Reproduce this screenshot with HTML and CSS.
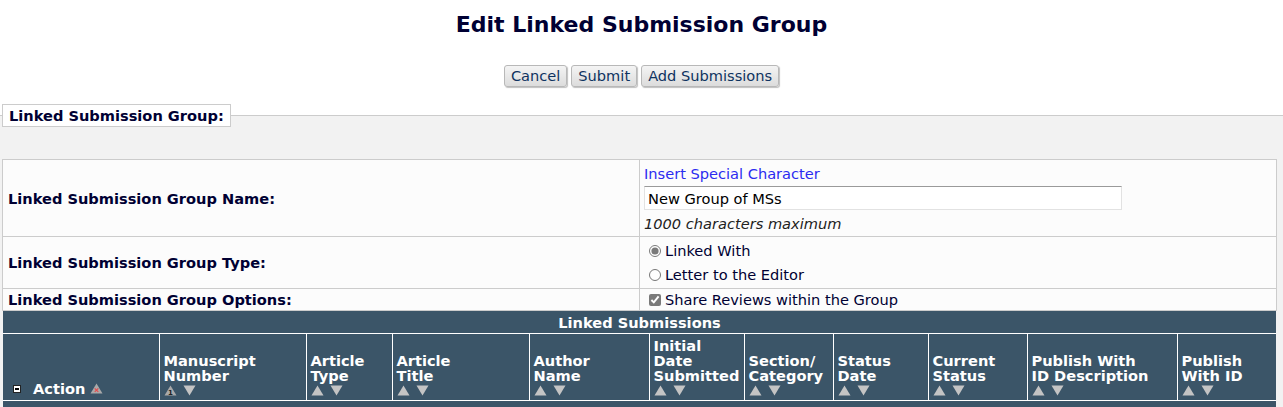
FILE: index.html
```html
<!DOCTYPE html>
<html>
<head>
<meta charset="utf-8">
<link rel="stylesheet" href="styles.css">
</head>
<body>
<h1 class="title">Edit Linked Submission Group</h1>
<div class="actions">
  <button class="btn">Cancel</button>
  <button class="btn">Submit</button>
  <button class="btn">Add Submissions</button>
</div>
<fieldset class="group">
  <legend class="group-legend">Linked Submission Group:</legend>
  <table class="form">
    <tr class="row-name">
      <th class="label">Linked Submission Group Name:</th>
      <td class="value">
        <div class="line"><a class="link" href="#">Insert Special Character</a></div>
        <input class="text-input" type="text" value="New Group of MSs">
        <div class="line hint">1000 characters maximum</div>
      </td>
    </tr>
    <tr class="row-type">
      <th class="label">Linked Submission Group Type:</th>
      <td class="value">
        <label class="opt"><input type="radio" name="t" checked>Linked With</label>
        <label class="opt"><input type="radio" name="t">Letter to the Editor</label>
      </td>
    </tr>
    <tr class="row-opts">
      <th class="label">Linked Submission Group Options:</th>
      <td class="value">
        <label class="opt"><input type="checkbox" checked>Share Reviews within the Group</label>
      </td>
    </tr>
  </table>
  <table class="grid">
    <colgroup>
      <col class="c1"><col class="c2"><col class="c3"><col class="c4"><col class="c5"><col class="c6"><col class="c7"><col class="c8"><col class="c9"><col class="c10"><col class="c11">
    </colgroup>
    <tr><th class="grid-title" colspan="11">Linked Submissions</th></tr>
    <tr class="heads">
      <th><span class="action-head"><span class="minus"></span>Action<svg class="sort" width="13" height="11" viewBox="0 0 13 11"><path d="M6.5 0.5 L12.5 10.5 L0.5 10.5 Z" fill="#a9a9a9"/><path d="M4.7 5.3 L8.3 8.9 M8.3 5.3 L4.7 8.9" stroke="#e8484a" stroke-width="1.1"/></svg></span></th>
      <th>Manuscript<br>Number<div class="arrows"><svg class="sort" width="13" height="11" viewBox="0 0 13 11"><path d="M6.5 0.5 L12.5 10.5 L0.5 10.5 Z" fill="#a9a9a9"/><text x="6.5" y="9.8" font-size="7" font-family="DejaVu Sans, sans-serif" text-anchor="middle" fill="#222">1</text></svg><svg class="sort" width="13" height="11" viewBox="0 0 13 11"><path d="M0.5 0.5 L12.5 0.5 L6.5 10.5 Z" fill="#c4c4c4"/></svg></div></th>
      <th>Article<br>Type<div class="arrows"><svg class="sort" width="13" height="11" viewBox="0 0 13 11"><path d="M6.5 0.5 L12.5 10.5 L0.5 10.5 Z" fill="#c4c4c4"/></svg><svg class="sort" width="13" height="11" viewBox="0 0 13 11"><path d="M0.5 0.5 L12.5 0.5 L6.5 10.5 Z" fill="#c4c4c4"/></svg></div></th>
      <th>Article<br>Title<div class="arrows"><svg class="sort" width="13" height="11" viewBox="0 0 13 11"><path d="M6.5 0.5 L12.5 10.5 L0.5 10.5 Z" fill="#c4c4c4"/></svg><svg class="sort" width="13" height="11" viewBox="0 0 13 11"><path d="M0.5 0.5 L12.5 0.5 L6.5 10.5 Z" fill="#c4c4c4"/></svg></div></th>
      <th>Author<br>Name<div class="arrows"><svg class="sort" width="13" height="11" viewBox="0 0 13 11"><path d="M6.5 0.5 L12.5 10.5 L0.5 10.5 Z" fill="#c4c4c4"/></svg><svg class="sort" width="13" height="11" viewBox="0 0 13 11"><path d="M0.5 0.5 L12.5 0.5 L6.5 10.5 Z" fill="#c4c4c4"/></svg></div></th>
      <th>Initial<br>Date<br>Submitted<div class="arrows"><svg class="sort" width="13" height="11" viewBox="0 0 13 11"><path d="M6.5 0.5 L12.5 10.5 L0.5 10.5 Z" fill="#c4c4c4"/></svg><svg class="sort" width="13" height="11" viewBox="0 0 13 11"><path d="M0.5 0.5 L12.5 0.5 L6.5 10.5 Z" fill="#c4c4c4"/></svg></div></th>
      <th>Section/<br>Category<div class="arrows"><svg class="sort" width="13" height="11" viewBox="0 0 13 11"><path d="M6.5 0.5 L12.5 10.5 L0.5 10.5 Z" fill="#c4c4c4"/></svg><svg class="sort" width="13" height="11" viewBox="0 0 13 11"><path d="M0.5 0.5 L12.5 0.5 L6.5 10.5 Z" fill="#c4c4c4"/></svg></div></th>
      <th>Status<br>Date<div class="arrows"><svg class="sort" width="13" height="11" viewBox="0 0 13 11"><path d="M6.5 0.5 L12.5 10.5 L0.5 10.5 Z" fill="#c4c4c4"/></svg><svg class="sort" width="13" height="11" viewBox="0 0 13 11"><path d="M0.5 0.5 L12.5 0.5 L6.5 10.5 Z" fill="#c4c4c4"/></svg></div></th>
      <th>Current<br>Status<div class="arrows"><svg class="sort" width="13" height="11" viewBox="0 0 13 11"><path d="M6.5 0.5 L12.5 10.5 L0.5 10.5 Z" fill="#c4c4c4"/></svg><svg class="sort" width="13" height="11" viewBox="0 0 13 11"><path d="M0.5 0.5 L12.5 0.5 L6.5 10.5 Z" fill="#c4c4c4"/></svg></div></th>
      <th>Publish With<br>ID Description<div class="arrows"><svg class="sort" width="13" height="11" viewBox="0 0 13 11"><path d="M6.5 0.5 L12.5 10.5 L0.5 10.5 Z" fill="#c4c4c4"/></svg><svg class="sort" width="13" height="11" viewBox="0 0 13 11"><path d="M0.5 0.5 L12.5 0.5 L6.5 10.5 Z" fill="#c4c4c4"/></svg></div></th>
      <th>Publish<br>With ID<div class="arrows"><svg class="sort" width="13" height="11" viewBox="0 0 13 11"><path d="M6.5 0.5 L12.5 10.5 L0.5 10.5 Z" fill="#c4c4c4"/></svg><svg class="sort" width="13" height="11" viewBox="0 0 13 11"><path d="M0.5 0.5 L12.5 0.5 L6.5 10.5 Z" fill="#c4c4c4"/></svg></div></th>
    </tr>
    <tr class="band"><td colspan="11"></td></tr>
  </table>
</fieldset>
</body>
</html>
```

FILE: styles.css
```css
html, body {
  margin: 0;
  padding: 0;
  background: #ffffff;
  font-family: "DejaVu Sans", Verdana, sans-serif;
  font-size: 14.6px;
  color: #000033;
}

.title {
  margin: 0;
  padding-top: 12px;
  height: 26px;
  line-height: 26px;
  text-align: center;
  font-size: 22px;
  font-weight: bold;
  color: #000033;
}

.actions {
  display: flex;
  justify-content: center;
  gap: 4px;
  margin-top: 27px;
  height: 22px;
}

.btn {
  height: 22px;
  padding: 0 6px;
  font-family: "DejaVu Sans", Verdana, sans-serif;
  font-size: 14.6px;
  line-height: 18px;
  color: #0e3360;
  background: linear-gradient(#f4f4f4, #dcdcdc);
  border: 1px solid #b8b8b8;
  border-radius: 3px;
  box-shadow: 1px 1px 1px rgba(0,0,0,0.25);
}

.group {
  margin: 17px 0 0 0;
  padding: 32px 6px 0 2px;
  border: none;
  border-top: 1px solid #cccccc;
  background: #f2f2f2;
  min-width: 0;
}

.group-legend {
  padding: 3px 6px 3px 6px;
  margin: 0;
  background: #ffffff;
  border: 1px solid #cccccc;
  font-weight: bold;
  font-size: 14.6px;
  line-height: 15px;
  color: #000033;
}

.form {
  width: 100%;
  border-collapse: collapse;
  background: #fcfcfc;
}

.form th, .form td {
  border: 1px solid #cccccc;
}

.label {
  width: 50%;
  text-align: left;
  padding: 0 5px;
  font-weight: bold;
  vertical-align: middle;
}

.value {
  padding: 4px 4px 2px 4px;
  vertical-align: top;
}

.line {
  line-height: 20px;
}

.link {
  color: #2b2bf0;
  text-decoration: none;
}

.text-input {
  display: block;
  box-sizing: border-box;
  width: 478px;
  height: 24px;
  margin: 2px 0 4px 0;
  padding: 0 3px;
  border: 1px solid #e2e2e2;
  border-top-color: #9a9a9a;
  font-family: "DejaVu Sans", Verdana, sans-serif;
  font-size: 14.6px;
  color: #000;
  background: #fff;
  outline: none;
}

.hint {
  font-style: italic;
  color: #222;
}

.opt {
  display: flex;
  align-items: center;
  line-height: 18px;
  height: 24px;
  color: #000033;
}

.row-type .value {
  padding-top: 2px;
  padding-bottom: 1px;
}

.row-opts .opt {
  height: 18px;
}

.row-opts .value {
  padding-top: 2px;
  padding-bottom: 1px;
}

.opt input {
  margin: 0 4px 0 5px;
  width: 12px;
  height: 12px;
  accent-color: #7a7a7a;
}

.grid {
  width: calc(100% - 2px);
  margin-left: 1px;
  table-layout: fixed;
  border-collapse: collapse;
  background: #3b5568;
  color: #ffffff;
}

.c1 { width: 156px; }
.c2 { width: 147px; }
.c3 { width: 86px; }
.c4 { width: 137px; }
.c5 { width: 120px; }
.c6 { width: 95px; }
.c7 { width: 89px; }
.c8 { width: 95px; }
.c9 { width: 99px; }
.c10 { width: 150px; }
.c11 { width: auto; }

.grid-title {
  height: 22px;
  padding: 0;
  text-align: center;
  font-weight: bold;
  font-size: 14.6px;
  border-bottom: 1px solid #ffffff;
}

.heads th {
  height: 59px;
  padding: 3px 4px 4px 4px;
  text-align: left;
  vertical-align: bottom;
  font-weight: bold;
  font-size: 14.6px;
  line-height: 15px;
  border: 1px solid #ffffff;
  overflow: hidden;
}

.heads th:first-child {
  border-left: none;
}

.heads th:last-child {
  border-right: none;
}

.arrows {
  display: flex;
  gap: 6px;
  height: 11px;
  margin-top: 2px;
}

.sort {
  display: block;
}

.action-head {
  display: flex;
  align-items: center;
  gap: 5px;
  padding-left: 6px;
}

.minus {
  width: 6px;
  height: 6px;
  background: #ffffff;
  border: 1px solid #222;
  position: relative;
  margin-right: 7px;
}

.minus::after {
  content: "";
  position: absolute;
  left: 1px;
  right: 1px;
  top: 2px;
  height: 2px;
  background: #000;
}

.band td {
  height: 6px;
  padding: 0;
}
```
